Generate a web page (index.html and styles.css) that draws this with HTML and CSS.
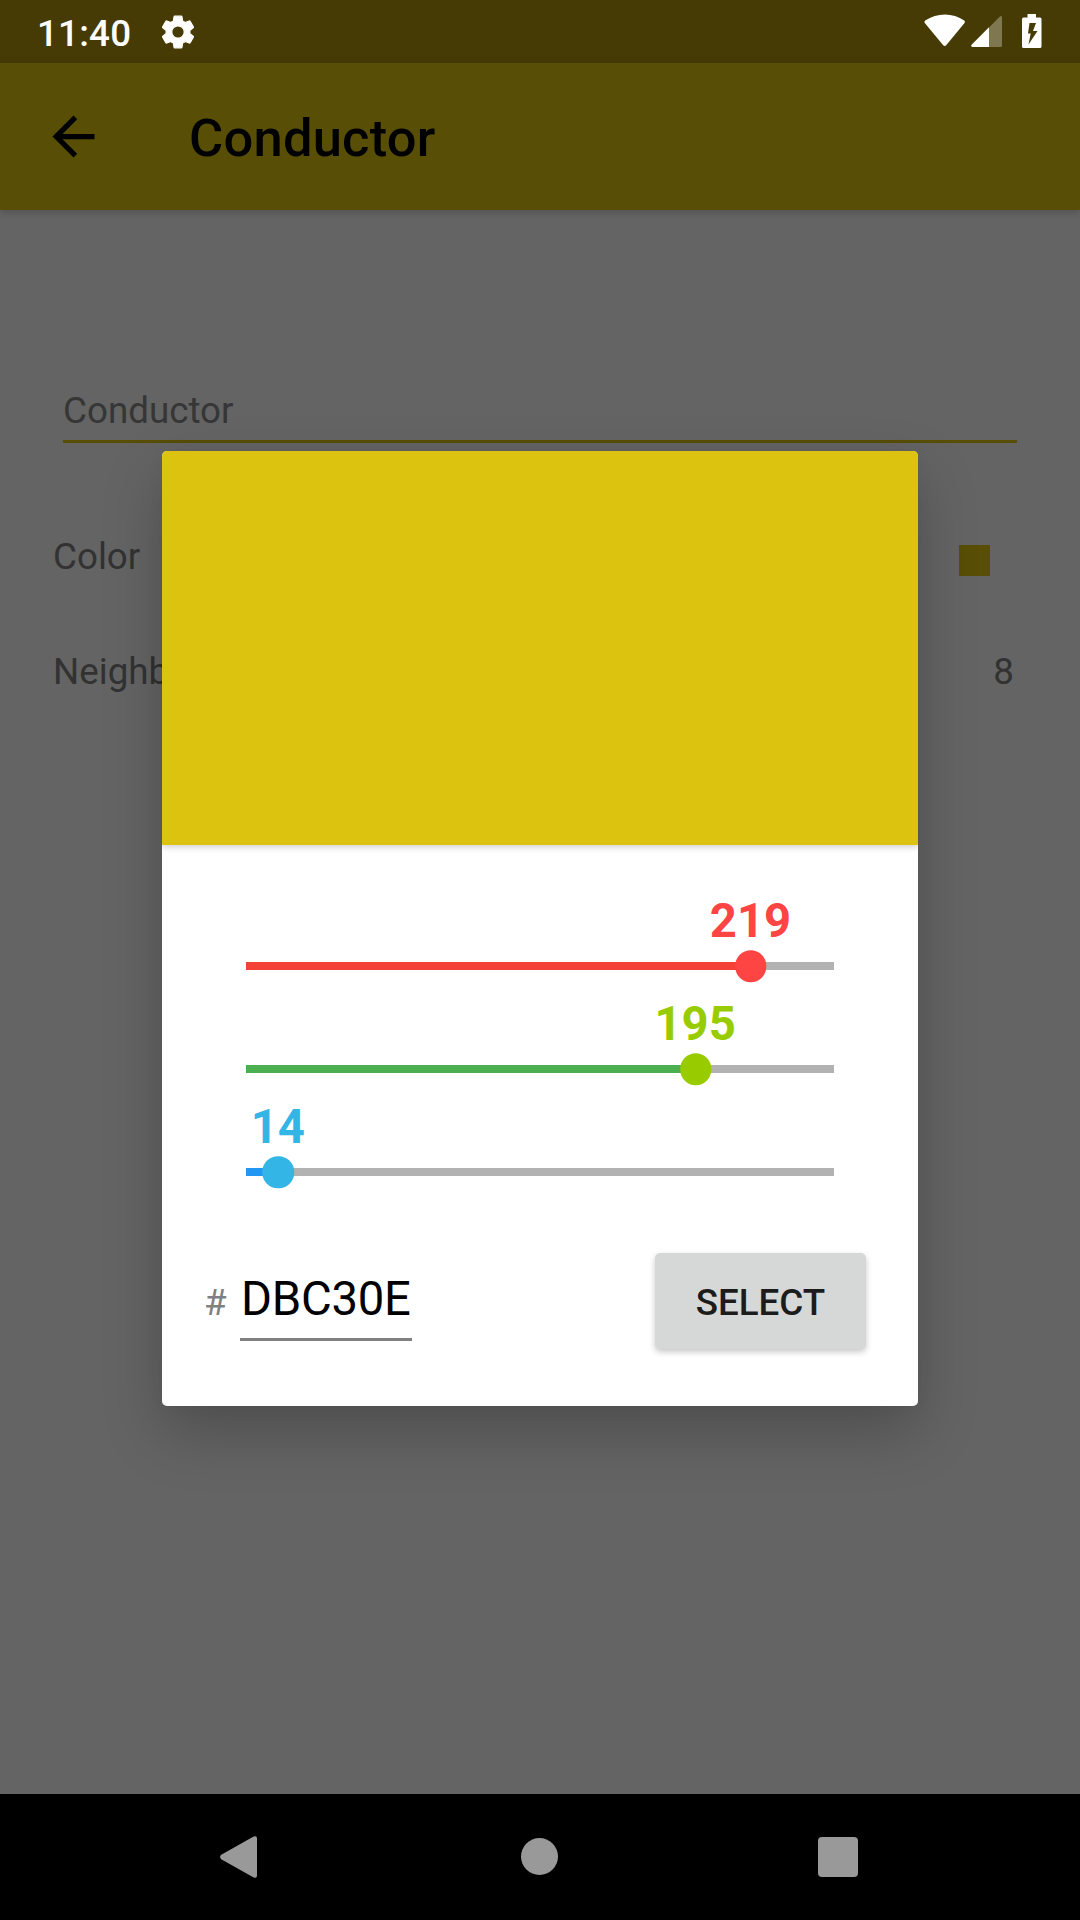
FILE: index.html
```html
<!DOCTYPE html>
<html lang="en">
<head>
<meta charset="utf-8">
<title>Conductor</title>
<link rel="stylesheet" href="styles.css">
</head>
<body>
<div class="screen">
  <header class="status-bar">
    <span class="clock">11:40</span>
    <svg class="gear" width="38" height="38" viewBox="0 0 24 24"><path fill="#fff" stroke="#fff" stroke-width=".8" stroke-linejoin="round" fill-rule="evenodd" d="M19.43 12.98c.04-.32.07-.64.07-.98s-.03-.66-.07-.98l2.11-1.65c.19-.15.24-.42.12-.64l-2-3.46c-.12-.22-.39-.3-.61-.22l-2.49 1c-.52-.4-1.08-.73-1.69-.98l-.38-2.65C14.46 2.18 14.25 2 14 2h-4c-.25 0-.46.18-.49.42l-.38 2.65c-.61.25-1.17.59-1.69.98l-2.49-1c-.23-.09-.49 0-.61.22l-2 3.46c-.13.22-.07.49.12.64l2.11 1.65c-.04.32-.07.65-.07.98s.03.66.07.98l-2.11 1.65c-.19.15-.24.42-.12.64l2 3.46c.12.22.39.3.61.22l2.49-1c.52.4 1.08.73 1.69.98l.38 2.65c.03.24.24.42.49.42h4c.25 0 .46-.18.49-.42l.38-2.65c.61-.25 1.17-.59 1.69-.98l2.49 1c.23.09.49 0 .61-.22l2-3.46c.12-.22.07-.49-.12-.64zM12 15.950a3.950 3.950 0 1 1 0-7.900 3.950 3.950 0 0 1 0 7.900z"/></svg>
    <svg class="wifi" width="42" height="33" viewBox="0 0 42 33"><path fill="#fff" d="M1 9.200Q-.2 7.700 1.200 6.500C13-1.500 29-1.500 40.200 6.500Q41.500 7.700 40.300 9.200L22.200 31.200Q20.700 32.800 19.200 31.200Z"/></svg>
    <svg class="signal" width="31" height="31" viewBox="0 0 31 31"><path fill="#7e774f" d="M29.200.3Q31-.4 31 1.500V29.500Q31 31 29.500 31H18V11.500Z"/><path fill="#fff" d="M18 11.300V31H1.500Q-.7 30.500.6 28.700Z"/></svg>
    <svg class="battery" width="20" height="34" viewBox="0 0 20 34"><path fill="#fff" fill-rule="evenodd" d="M5.500 0H14V3.500H18Q19.500 3.500 19.500 5V32.500Q19.500 34 18 34H1.500Q0 34 0 32.500V5Q0 3.500 1.500 3.500H5.500ZM7.500 9 6 19.500H8.700L6.500 30.500 15.500 17H11L14 9Z"/></svg>
  </header>
  <div class="app-bar">
    <svg width="63" height="63" viewBox="0 0 24 24"><path d="M20 11H7.830l5.590-5.590L12 4l-8 8 8 8 1.410-1.410L7.830 13H20v-2z"/></svg>
    <h1>Conductor</h1>
  </div>
  <main class="content">
    <div class="name-field">Conductor</div>
    <div class="row row-color"><span>Color</span><i class="swatch"></i></div>
    <div class="row row-neighbors"><span>Neighbors</span><span>8</span></div>
  </main>
  <nav class="nav-bar">
    <svg width="38" height="42" viewBox="0 0 38 42"><path fill="#999" d="M1.200 18.800 33.700.5Q37 -.7 37 2.500V39.500Q37 42.700 33.700 41.500L1.200 23.200Q-1 21 1.200 18.800Z"/></svg>
    <i class="home"></i>
    <i class="recents"></i>
  </nav>
  <section class="dialog">
    <div class="preview"></div>
    <div class="sliders">
      <div class="slider red" style="--value:219"><b>219</b><div class="track"><i class="fill"></i><i class="thumb"></i></div></div>
      <div class="slider green" style="--value:195"><b>195</b><div class="track"><i class="fill"></i><i class="thumb"></i></div></div>
      <div class="slider blue" style="--value:14"><b>14</b><div class="track"><i class="fill"></i><i class="thumb"></i></div></div>
    </div>
    <div class="actions">
      <span class="hash">#</span>
      <div class="hex">DBC30E</div>
      <button class="select">SELECT</button>
    </div>
  </section>
</div>
</body>
</html>
```
FILE: styles.css
```css
* { box-sizing: border-box; }
body {
  margin: 0;
  font-family: Roboto, sans-serif;
  font-size: 36.75px;
}
.screen {
  position: relative;
  display: flex;
  flex-direction: column;
  width: 1080px;
  height: 1920px;
  overflow: hidden;
  background: #646464;
}
.status-bar {
  display: flex;
  align-items: flex-start;
  height: 63px;
  padding: 0 38px 0 37px;
  background: #463b05;
}
.clock {
  width: 122px;
  padding-top: 12px;
  line-height: 43px;
  letter-spacing: .2px;
  font-weight: 500;
  color: #fff;
}
.gear { margin-top: 13px; }
.wifi { margin: 14px 5px 0 auto; }
.signal { margin: 16px 20px 0 0; }
.battery { margin-top: 14px; }
.app-bar {
  display: flex;
  align-items: center;
  gap: 84px;
  height: 147px;
  padding-left: 42px;
  background: #584e06;
  box-shadow: 0 2px 8px rgba(0, 0, 0, .2);
}
.app-bar h1 {
  margin: 2px 0 0;
  font-size: 52.5px;
  line-height: 62px;
  letter-spacing: .2px;
  font-weight: 500;
  color: #000;
}
.content { flex: 1; color: #323232; }
.name-field {
  height: 68px;
  margin: 165px 63px 0;
  padding-top: 14px;
  line-height: 43px;
  border-bottom: 3px solid #584e06;
  color: #363636;
}
.row {
  display: flex;
  justify-content: space-between;
  padding: 0 66px 0 53px;
  line-height: 43px;
}
.row-color { margin-top: 92px; padding-right: 90px; }
.row-neighbors { margin-top: 72px; }
.swatch {
  width: 31px;
  height: 31px;
  margin-top: 10px;
  background: #584e06;
}
.nav-bar {
  display: flex;
  align-items: center;
  justify-content: space-between;
  height: 126px;
  padding: 0 222px 0 220px;
  background: #000;
}
.home {
  width: 37px;
  height: 37px;
  margin: 0 0 1px 3px;
  border-radius: 50%;
  background: #999;
}
.recents {
  width: 40px;
  height: 40px;
  border-radius: 4px;
  background: #999;
}
.dialog {
  position: absolute;
  left: 162px;
  top: 451px;
  width: 756px;
  height: 955px;
  overflow: hidden;
  border-radius: 5px;
  background: #fff;
  box-shadow: 0 26px 60px rgba(0, 0, 0, .22), 0 0 20px rgba(0, 0, 0, .03);
}
.preview {
  height: 394px;
  background: #dbc30f;
  box-shadow: 0 2px 7px rgba(0, 0, 0, .2);
}
.sliders {
  padding: 47px 84px 0;
}
.slider {
  --pos: calc(var(--value) / 255 * 100%);
  position: relative;
  height: 103px;
  padding-top: 70px;
}
.slider b {
  position: absolute;
  left: var(--pos);
  top: 1px;
  transform: translateX(-50%);
  margin-left: -.5px;
  font-size: 47.25px;
  line-height: 56px;
  color: var(--accent);
}
.track {
  position: relative;
  height: 8px;
  background: #b2b2b2;
}
.fill {
  display: block;
  width: var(--pos);
  height: 8px;
  background: var(--line);
}
.thumb {
  position: absolute;
  left: var(--pos);
  top: 4px;
  width: 31.500px;
  height: 31.500px;
  border-radius: 50%;
  transform: translate(-50%, -50%);
  background: var(--accent);
}
.red { --accent: #ff4444; --line: #f44336; }
.green { --accent: #99cc00; --line: #4caf50; }
.blue { --accent: #33b5e5; --line: #2196f3; }
.actions {
  display: flex;
  align-items: flex-start;
  margin-top: 52px;
  padding: 0 52px 0 42px;
}
.hash {
  width: 36px;
  padding-top: 28px;
  line-height: 43px;
  color: #808080;
}
.hex {
  width: 172px;
  height: 88px;
  padding: 18px 0 0 1px;
  font-size: 47.250px;
  line-height: 56px;
  letter-spacing: -.25px;
  border-bottom: 3px solid #808080;
  color: #000;
}
.select {
  width: 211px;
  height: 96px;
  margin: 0 0 0 auto;
  padding: 2px 0 0;
  font: 500 36.750px/43px Roboto, sans-serif;
  border: 0;
  border-radius: 5px;
  background: #d6d8d7;
  box-shadow: 0 3px 6px rgba(0, 0, 0, .22);
  color: #1c1c1c;
}
```
